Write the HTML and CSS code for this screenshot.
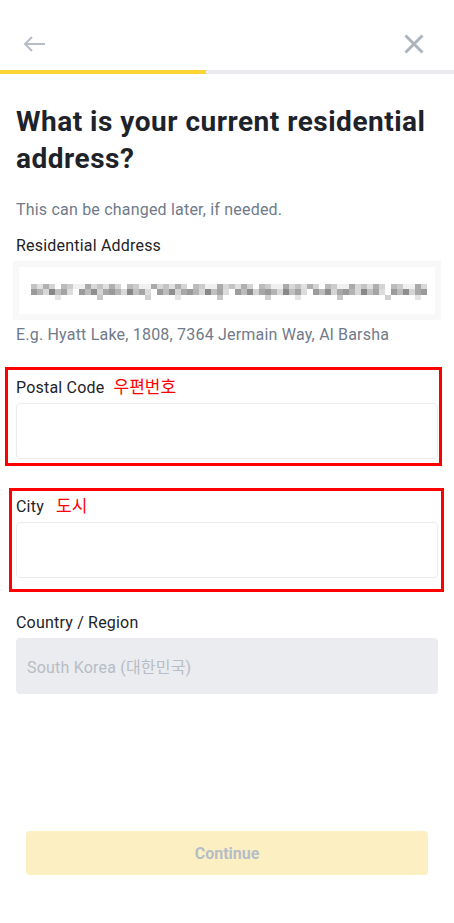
FILE: index.html
```html
<!DOCTYPE html>
<html lang="en">
<head>
    <meta charset="UTF-8">
    <meta name="viewport" content="width=device-width, initial-scale=1.0">
    <title>Residential Address</title>
    <link rel="stylesheet" href="styles.css">
</head>
<body>
    <div class="topbar">
        <svg class="icon back" width="24" height="24" viewBox="0 0 24 24">
            <path d="M23 12H3M10 5l-7 7 7 7" fill="none" stroke="#b7bdc6" stroke-width="2"/>
        </svg>
        <svg class="icon close" width="24" height="24" viewBox="0 0 24 24">
            <path d="M3.5 3.5l17 17M20.5 3.5l-17 17" fill="none" stroke="#aeb4bc" stroke-width="3"/>
        </svg>
    </div>
    <div class="progress"><div class="progress-fill"></div></div>

    <div class="container">
        <h1>What is your current residential address?</h1>
        <p class="subtitle">This can be changed later, if needed.</p>

        <div class="form-group">
            <label>Residential Address</label>
            <div class="address-box">
                <div class="blurred"></div>
            </div>
            <p class="hint">E.g. Hyatt Lake, 1808, 7364 Jermain Way, Al Barsha</p>
        </div>

        <div class="form-group marked postal">
            <label>Postal Code <span class="note">우편번호</span></label>
            <input type="text" class="field">
        </div>

        <div class="form-group marked city">
            <label>City <span class="note">도시</span></label>
            <input type="text" class="field">
        </div>

        <div class="form-group country">
            <label>Country / Region</label>
            <div class="field disabled">South Korea (대한민국)</div>
        </div>

        <button class="continue-btn" disabled>Continue</button>
    </div>
</body>
</html>
```

FILE: styles.css
```css
body {
    font-family: Roboto, "Noto Sans CJK KR", sans-serif;
    background-color: #ffffff;
    color: #1e2329;
    margin: 0;
    letter-spacing: 0.2px;
}
.topbar {
    display: flex;
    justify-content: space-between;
    align-items: center;
    height: 70px;
    padding: 18px 28px 0 22px;
    box-sizing: border-box;
}
.icon {
    display: block;
}
.progress {
    height: 4px;
    background-color: #eaecef;
}
.progress-fill {
    width: 206px;
    height: 100%;
    background-color: #fcd535;
}
.container {
    padding: 0 16px;
}
h1 {
    font-size: 28px;
    line-height: 37px;
    font-weight: 700;
    letter-spacing: 0.5px;
    margin: 29px 0 0;
}
.subtitle {
    font-size: 16px;
    color: #707a8a;
    margin: 23px 0 0;
}
.form-group {
    margin-top: 16px;
}
label {
    display: block;
    font-size: 16px;
    line-height: 22px;
    margin-bottom: 4px;
    color: #1e2329;
}
.note {
    font-family: "Noto Sans CJK KR", sans-serif;
    font-size: 17px;
    letter-spacing: 0;
    color: #ff0000;
    margin-left: 5px;
}
.city .note {
    margin-left: 8px;
}
.address-box {
    margin: 0 -3px;
    height: 59px;
    border: 6px solid #f8f8f8;
    box-sizing: border-box;
    display: flex;
    align-items: center;
    padding: 0 8px 0 12px;
}
.blurred {
    height: 18px;
    flex: 1;
    background:
        repeating-linear-gradient(90deg, #ffffff 0 24px, #e4e4e4 24px 30px, #ffffff 30px 66px, #c8c8c8 66px 72px, #ffffff 72px 114px, #d0d0d0 114px 120px) 0 13px / 100% 5px no-repeat,
        repeating-linear-gradient(90deg, #9a9a9a 0 6px, #b4b4b4 6px 12px, #d8d8d8 12px 18px, #888888 18px 24px, #c0c0c0 24px 30px, #a4a4a4 30px 36px, #dcdcdc 36px 42px, #ffffff 42px 48px, #9c9c9c 48px 54px, #bcbcbc 54px 60px, #8e8e8e 60px 66px, #d4d4d4 66px 72px, #a8a8a8 72px 78px) 0 7px / 100% 6px no-repeat,
        repeating-linear-gradient(90deg, #c4c4c4 0 6px, #e0e0e0 6px 12px, #b0b0b0 12px 18px, #d4d4d4 18px 24px, #ffffff 24px 30px, #bcbcbc 30px 36px, #cccccc 36px 42px, #f0f0f0 42px 54px, #aaaaaa 54px 60px, #d8d8d8 60px 66px) 0 2px / 100% 5px no-repeat;
}
.hint {
    font-size: 16px;
    color: #707a8a;
    margin: 5px 0 0;
}
.field {
    display: block;
    width: 100%;
    height: 56px;
    box-sizing: border-box;
    border: 1px solid #eaecef;
    border-radius: 4px;
    padding: 0 10px;
    font-family: inherit;
    font-size: 16px;
    background: #ffffff;
}
.field.disabled {
    background-color: #eaecef;
    color: #b7bdc6;
    display: flex;
    align-items: center;
}
.marked {
    position: relative;
}
.marked::after {
    content: "";
    position: absolute;
    border: 3px solid #ff0000;
    pointer-events: none;
}
.postal {
    margin-top: 31px;
}
.postal::after {
    left: -11px;
    right: -4px;
    top: -8px;
    bottom: -7px;
}
.city {
    margin-top: 35px;
}
.city::after {
    left: -7px;
    right: -6px;
    top: -6px;
    bottom: -14px;
}
.country {
    margin-top: 34px;
}
.continue-btn {
    display: block;
    width: calc(100% - 20px);
    margin: 137px auto 0;
    height: 44px;
    border: none;
    border-radius: 4px;
    background-color: #fcf0c3;
    color: #b7bdc6;
    font-family: inherit;
    font-size: 16px;
    font-weight: 700;
}
```
